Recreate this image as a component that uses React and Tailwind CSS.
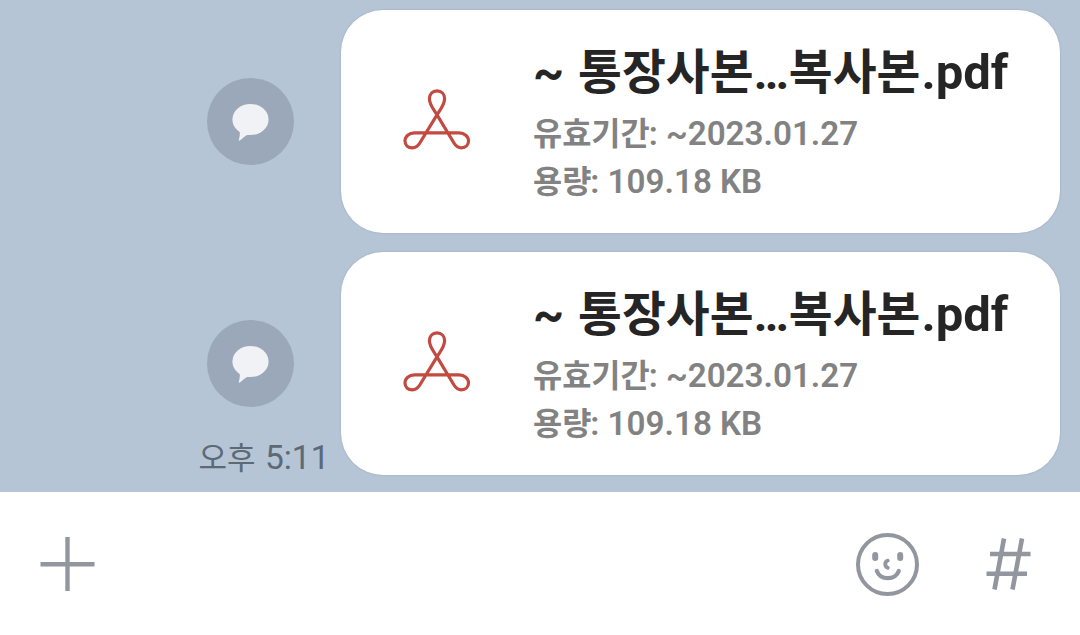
const files = [
  { id: 1, name: '통장사본…복사본', ext: '.pdf', expires: '~2023.01.27', size: '109.18 KB' },
  { id: 2, name: '통장사본…복사본', ext: '.pdf', expires: '~2023.01.27', size: '109.18 KB', time: '5:11' }
];

function BubbleIcon() {
  return (
    <svg width="38" height="38" viewBox="0 0 38 38" fill="#f0f2f5">
      <ellipse cx="18.5" cy="16.5" rx="18.1" ry="15.6" />
      <path d="M7.6 27.5 C8.2 31 7.6 34 6.8 36.8 C6.6 37.8 7.2 38 7.8 37.6 C10.5 35.4 13 33 16 31.5 Z" />
    </svg>
  );
}

function PdfIcon() {
  return (
    <svg width="68" height="62" viewBox="0 0 68 62" fill="none" stroke="#c24a40" strokeWidth="3.2" strokeLinejoin="round">
      <path d="M34 25.8 C30.5 20 26.4 15.8 26.4 9.8 C26.4 5 29.6 1.8 34 1.8 C38.4 1.8 41.6 5 41.6 9.8 C41.6 15.8 37.5 20 34 25.8 L16.8 54 C15 57 12.5 58.9 9.3 58.9 C5 58.9 2 56 2 52.1 C2 47.2 6 43.9 11.5 43.9 H56 C61.5 43.9 65.5 47.2 65.5 52.1 C65.5 56 62.5 58.9 58.4 58.9 C55.2 58.9 52.8 57 51 54 Z" />
    </svg>
  );
}

function InfoRow({ label, value }) {
  return (
    <p className="text-[33.2px] leading-[47px] font-semibold text-[#828282]">
      <span className="text-[31.7px]">{label}</span>
      <span className="ml-[-1px] font-['Roboto',sans-serif]">: {value}</span>
    </p>
  );
}

function FileMessage({ file }) {
  return (
    <div className="flex h-[223px] justify-end">
      {/* Share button and time */}
      <div className="flex w-[141px] flex-col items-center">
        <button className="mt-[68px] ml-[-40px] flex size-[87px] shrink-0 items-center justify-center rounded-full bg-[#9ba8b9]">
          <BubbleIcon />
        </button>
        {file.time && (
          <p className="mt-[30px] ml-[-13px] text-[33.5px] leading-[42px] whitespace-nowrap text-[#5d6975]">
            <span className="mr-[1px] text-[31px]">오후</span> {file.time}
          </p>
        )}
      </div>

      {/* File card */}
      <div className="flex w-[719px] rounded-[42px] bg-white shadow-[0_0_2px_rgba(70,90,115,0.3)]">
        <div className="mt-[79px] ml-[62px] w-[68px] shrink-0">
          <PdfIcon />
        </div>
        <div className="mt-[31px] ml-[62px] whitespace-nowrap">
          <p className="text-[48px] leading-[64px] font-bold text-[#252525]">
            <span className="mr-[2px]">~ </span>
            <span className="text-[47.7px]">{file.name}</span>
            <span className="ml-[1px] font-['Roboto',sans-serif] text-[49px]">{file.ext}</span>
          </p>
          <div className="mt-[5px]">
            <InfoRow label="유효기간" value={file.expires} />
            <InfoRow label="용량" value={file.size} />
          </div>
        </div>
      </div>
    </div>
  );
}

function InputBar() {
  return (
    <div className="flex h-[143px] items-start bg-white">
      <button className="mt-[45px] ml-[40px]">
        <svg width="55" height="55" viewBox="0 0 55 55" stroke="#92969f" strokeWidth="4.4">
          <path d="M0.5 27.2 H54.5 M27.5 0 V54" />
        </svg>
      </button>
      <button className="mt-[41px] ml-auto">
        <svg width="64" height="64" viewBox="0 0 64 64" fill="none" stroke="#92969f" strokeLinecap="round">
          <circle cx="31.5" cy="31.5" r="29.5" strokeWidth="4" />
          <path d="M19.2 22 V25 M44.2 22 V25" strokeWidth="6" />
          <path d="M31.8 27.6 C28.4 29 28.4 33.4 31.8 34.8" strokeWidth="3.8" />
          <path d="M20.8 38 C24.5 47.6 39 47.6 42.8 38" strokeWidth="4.2" />
        </svg>
      </button>
      <button className="mt-[46px] mr-[49px] ml-[66px]">
        <svg width="45" height="53" viewBox="0 0 45 53" fill="none" stroke="#92969f" strokeWidth="4.6">
          <path d="M18 0.5 L8.5 51.5 M36 0.5 L26.5 51.5 M4 16 H44.5 M0.5 35.8 H41" />
        </svg>
      </button>
    </div>
  );
}

export default function App() {
  return (
    <div className="h-[635px] w-[1080px] overflow-hidden bg-[#b5c5d6] font-['Roboto','Noto_Sans_CJK_KR',sans-serif]">
      <div className="flex h-[492px] flex-col gap-[19px] pt-[10px] pr-[20px]">
        {files.map((file) => (
          <FileMessage key={file.id} file={file} />
        ))}
      </div>
      <InputBar />
    </div>
  );
}
